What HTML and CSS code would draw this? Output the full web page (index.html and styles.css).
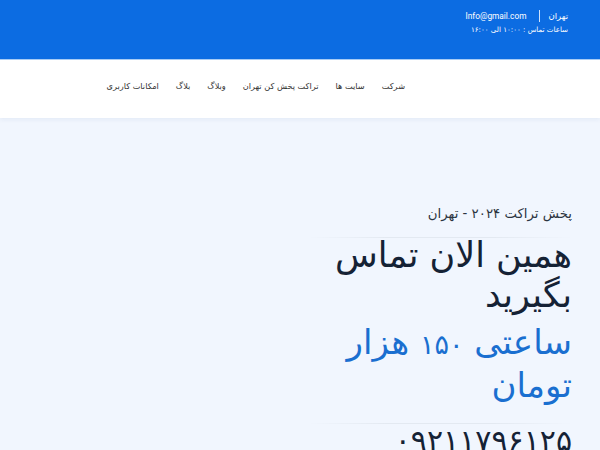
FILE: index.html
```html
<!DOCTYPE html>
<html lang="fa" dir="rtl">
<head>
<meta charset="utf-8">
<title>پخش تراکت تهران</title>
<link rel="stylesheet" href="styles.css">
</head>
<body>
<header class="topbar">
  <div class="topbar-inner">
    <div class="topbar-row">
      <span class="city">تهران</span>
      <span class="sep"></span>
      <span class="mail" dir="ltr">Info@gmail.com</span>
    </div>
    <div class="hours">ساعات تماس : ۱۰:۰۰ الی ۱۶:۰۰</div>
  </div>
</header>
<nav class="nav">
  <ul class="menu">
    <li>شرکت</li>
    <li>سایت ها</li>
    <li>تراکت پخش کن تهران</li>
    <li>وبلاگ</li>
    <li>بلاگ</li>
    <li>امکانات کاربری</li>
  </ul>
</nav>
<main class="hero">
  <div class="hero-col">
    <p class="sub">پخش تراکت ۲۰۲۴ - تهران</p>
    <hr class="line">
    <h1 class="title">همین الان تماس بگیرید</h1>
    <h2 class="price">ساعتی <span class="num">۱۵۰</span> هزار تومان</h2>
    <hr class="line line-low">
    <p class="phone">۰۹۲۱۱۷۹۶۱۲۵</p>
  </div>
</main>
</body>
</html>
```
FILE: styles.css
```css
html, body {
  margin: 0;
  padding: 0;
}
body {
  font-family: "DejaVu Sans", "Noto Sans", sans-serif;
  background: #f1f6fe;
  height: 450px;
  overflow: hidden;
}
.topbar {
  background: #0c6ce2;
  height: 60px;
  border-bottom: 1px solid #a9cdf6;
  box-sizing: border-box;
  color: #fff;
}
.topbar-inner {
  padding: 8px 32px 0 0;
  font-size: 8.5px;
}
.topbar-row {
  display: flex;
  align-items: center;
  height: 16px;
}
.sep {
  width: 1px;
  height: 12px;
  background: #cfe2fb;
  margin: 0 8px 0 13px;
}
.mail {
  font-family: "Roboto", "Liberation Sans", sans-serif;
  font-size: 8.3px;
}
.hours {
  margin-top: 1px;
  font-size: 7.1px;
}
.nav {
  background: #fff;
  height: 58px;
  display: flex;
  align-items: center;
  padding-bottom: 6px;
  box-sizing: border-box;
  box-shadow: 0 2px 4px rgba(40, 70, 130, 0.06);
  position: relative;
}
.menu {
  list-style: none;
  margin: 0;
  padding: 0 195px 0 0;
  display: flex;
  gap: 17px;
  font-size: 8.2px;
  color: #333;
}
.hero {
  display: flex;
  padding: 86px 28px 0 0;
}
.hero-col {
  width: 264px;
}
.sub {
  margin: 0;
  font-size: 13.3px;
  color: #2b3440;
  line-height: 20px;
}
.line {
  border: 0;
  height: 1px;
  background: linear-gradient(to left, #f1f6fe, #e3e9f1 30%, #e3e9f1 70%, #f1f6fe);
  margin: 13px 0 0 0;
}
.line-low {
  margin-top: 18px;
}
.title {
  margin: -3px 0 0 0;
  font-weight: normal;
  font-size: 35px;
  line-height: 40px;
  color: #152235;
}
.price {
  margin: 7px 0 0 0;
  font-weight: normal;
  font-size: 34px;
  line-height: 40px;
  color: #1a6fd0;
}
.num {
  font-size: 27px;
}
.phone {
  margin: -3px 0 0 0;
  font-size: 30px;
  line-height: 40px;
  color: #152235;
}
```
